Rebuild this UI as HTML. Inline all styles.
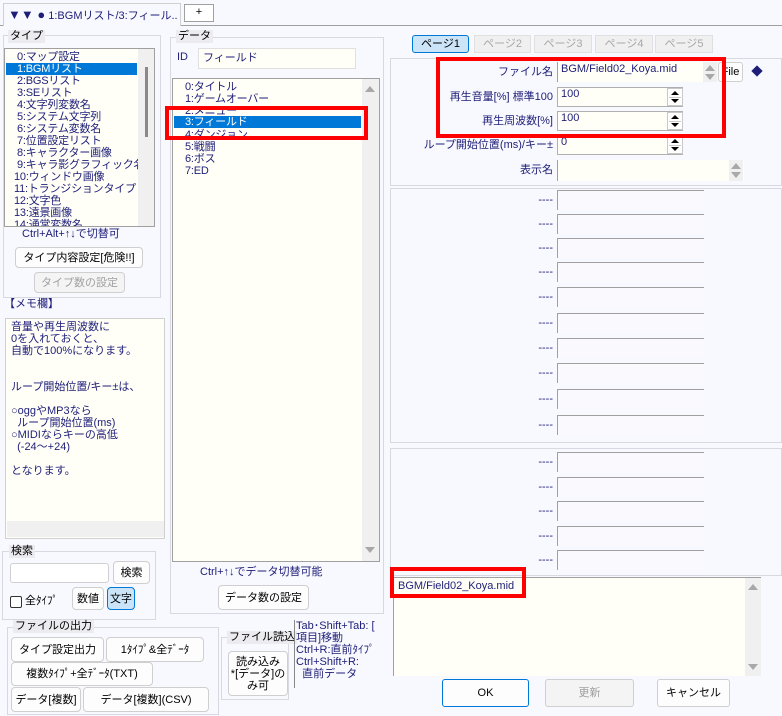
<!DOCTYPE html>
<html><head><meta charset="utf-8"><style>
*{box-sizing:border-box;margin:0;padding:0}
body{width:782px;height:716px;background:#f8f8ff;font-family:"Liberation Sans","Noto Sans CJK JP",sans-serif;font-size:11px;color:#1e1e78;position:relative;overflow:hidden}
.a{position:absolute}
.grp{position:absolute;border:1px solid #d8d8e0}
.lg{position:absolute;background:#ececf0;color:#000;padding:0 2px;line-height:13px;font-size:11px}
.box{position:absolute;background:#fffff8;border:1px solid #a0a0a0}
.btn{position:absolute;background:#fdfdfd;border:1px solid #cfcfcf;border-radius:4px;color:#000;text-align:center;font-size:11px;display:flex;align-items:center;justify-content:center;line-height:12px}
.dis{color:#a0a0a0;background:#f4f4f4}
.row{position:absolute;white-space:nowrap;line-height:12px;height:12px;letter-spacing:-0.2px}
.sel{background:#0078d7;color:#fff}
.red{position:absolute;border:4px solid #f00}
.lbl{position:absolute;text-align:right;white-space:nowrap;line-height:14px}
.vs{position:absolute;background:#f0f0f0}
.up{position:absolute;width:0;height:0;border-left:5px solid transparent;border-right:5px solid transparent;border-bottom:6px solid #a8a8a8}
.dn{position:absolute;width:0;height:0;border-left:5px solid transparent;border-right:5px solid transparent;border-top:6px solid #a8a8a8}
.spin{position:absolute;width:16px;background:#fff;border:1px solid #c8c8c8}
.spin:before{content:"";position:absolute;left:3px;top:2px;border-left:4px solid transparent;border-right:4px solid transparent;border-bottom:4px solid #000}
.spin:after{content:"";position:absolute;left:3px;top:10px;border-left:4px solid transparent;border-right:4px solid transparent;border-top:4px solid #000}
.spin i{position:absolute;left:1px;right:1px;top:8px;height:1px;background:#c8c8c8}
.tab{position:absolute;height:18px;border:1px solid #e0e0e0;background:#f0f0f0;color:#a8a8a8;text-align:center;line-height:16px}
</style></head><body>
<div class="a" style="left:0;top:25px;width:782px;height:1px;background:#a0a0a0"></div>
<div class="a" style="left:3px;top:3px;width:178px;height:23px;background:#f8f8ff;border:1px solid #d0d0d0;border-bottom:none;padding:5px 4px;color:#1e1e78;white-space:nowrap;line-height:12px"><span style="font-size:13px">▼▼ ●</span> 1:BGMリスト/3:フィール..</div>
<div class="a" style="left:184px;top:4px;width:30px;height:18px;background:#fff;border:1px solid #a0a0a0;text-align:center;line-height:15px;color:#000">+</div>

<div class="grp" style="left:3px;top:35px;width:158px;height:263px"></div>
<div class="lg" style="left:8px;top:30px">タイプ</div>
<div class="box" style="left:4px;top:48px;width:151px;height:179px;overflow:hidden">
<div class="row" style="left:12px;top:2px">0:マップ設定</div>
<div class="row sel" style="left:1px;top:14px;width:131px;padding-left:11px">1:BGMリスト</div>
<div class="row" style="left:12px;top:26px">2:BGSリスト</div>
<div class="row" style="left:12px;top:38px">3:SEリスト</div>
<div class="row" style="left:12px;top:50px">4:文字列変数名</div>
<div class="row" style="left:12px;top:62px">5:システム文字列</div>
<div class="row" style="left:12px;top:74px">6:システム変数名</div>
<div class="row" style="left:12px;top:86px">7:位置設定リスト</div>
<div class="row" style="left:12px;top:98px">8:キャラクター画像</div>
<div class="row" style="left:12px;top:110px">9:キャラ影グラフィック名</div>
<div class="row" style="left:9px;top:122px">10:ウィンドウ画像</div>
<div class="row" style="left:9px;top:134px">11:トランジションタイプ</div>
<div class="row" style="left:9px;top:146px">12:文字色</div>
<div class="row" style="left:9px;top:158px">13:遠景画像</div>
<div class="row" style="left:9px;top:170px">14:通常変数名</div>
<div class="vs" style="left:133px;top:0;width:16px;height:177px"></div>
<div class="a" style="left:140px;top:18px;width:3px;height:70px;background:#8a8a8a"></div>
</div>
<div class="a" style="left:22px;top:228px;line-height:12px">Ctrl+Alt+↑↓で切替可</div>
<div class="btn" style="left:15px;top:247px;width:128px;height:21px">タイプ内容設定[危険!!]</div>
<div class="btn dis" style="left:34px;top:272px;width:91px;height:21px">タイプ数の設定</div>

<div class="a" style="left:4px;top:298px;line-height:12px">【メモ欄】</div>
<div class="box" style="left:5px;top:318px;width:160px;height:221px;border-color:#d0d0d0;line-height:12px;padding:2px 0 0 5px;white-space:nowrap">音量や再生周波数に<br>0を入れておくと、<br>自動で100%になります。<br><br><br>ループ開始位置/キー±は、<br><br>○oggやMP3なら<br>&nbsp;&nbsp;ループ開始位置(ms)<br>○MIDIならキーの高低<br>&nbsp;&nbsp;(-24～+24)<br><br>となります。
<div class="vs" style="left:1px;top:202px;width:157px;height:16px"></div>
</div>

<div class="grp" style="left:2px;top:551px;width:154px;height:69px"></div>
<div class="lg" style="left:9px;top:545px">検索</div>
<div class="a" style="left:10px;top:563px;width:99px;height:20px;background:#fff;border:1px solid #d0d0d0;border-radius:3px"></div>
<div class="btn" style="left:113px;top:561px;width:37px;height:23px">検索</div>
<div class="a" style="left:10px;top:596px;width:12px;height:12px;border:1px solid #333;border-radius:2px;background:#fff"></div>
<div class="a" style="left:25px;top:594px;color:#000;line-height:14px">全ﾀｲﾌﾟ</div>
<div class="btn" style="left:72px;top:587px;width:32px;height:23px">数値</div>
<div class="btn" style="left:107px;top:587px;width:28px;height:23px;background:#cce4f7;border-color:#0078d7">文字</div>

<div class="grp" style="left:7px;top:627px;width:212px;height:88px"></div>
<div class="lg" style="left:13px;top:620px">ファイルの出力</div>
<div class="btn" style="left:11px;top:637px;width:93px;height:25px">タイプ設定出力</div>
<div class="btn" style="left:106px;top:637px;width:98px;height:25px">1ﾀｲﾌﾟ&amp;全ﾃﾞｰﾀ</div>
<div class="btn" style="left:11px;top:662px;width:142px;height:24px">複数ﾀｲﾌﾟ+全ﾃﾞｰﾀ(TXT)</div>
<div class="btn" style="left:11px;top:687px;width:70px;height:25px">データ[複数]</div>
<div class="btn" style="left:83px;top:687px;width:126px;height:25px">データ[複数](CSV)</div>
<div class="grp" style="left:221px;top:637px;width:68px;height:63px"></div>
<div class="lg" style="left:227px;top:631px">ファイル読込</div>
<div class="btn" style="left:228px;top:651px;width:60px;height:45px;line-height:12px">読み込み<br>*[データ]の<br>み可</div>
<div class="a" style="left:294px;top:620px;height:68px;border-left:1px solid #888;padding-left:1px;line-height:12px;white-space:nowrap">Tab･Shift+Tab: [<br>項目]移動<br>Ctrl+R:直前ﾀｲﾌﾟ<br>Ctrl+Shift+R:<br>&nbsp;&nbsp;直前データ</div>

<div class="grp" style="left:170px;top:37px;width:214px;height:577px"></div>
<div class="lg" style="left:176px;top:30px">データ</div>
<div class="a" style="left:177px;top:51px;line-height:12px">ID</div>
<div class="box" style="left:198px;top:48px;width:158px;height:21px;border-color:#e0e0e0;padding:2px 4px;line-height:14px">フィールド</div>
<div class="box" style="left:172px;top:78px;width:208px;height:484px;overflow:hidden">
<div class="row" style="left:12px;top:2px">0:タイトル</div>
<div class="row" style="left:12px;top:14px">1:ゲームオーバー</div>
<div class="row" style="left:12px;top:26px">2:メニュー</div>
<div class="row sel" style="left:1px;top:37px;width:187px;padding-left:11px">3:フィールド</div>
<div class="row" style="left:12px;top:50px">4:ダンジョン</div>
<div class="row" style="left:12px;top:62px">5:戦闘</div>
<div class="row" style="left:12px;top:74px">6:ボス</div>
<div class="row" style="left:12px;top:86px">7:ED</div>
<div class="vs" style="left:189px;top:0;width:17px;height:482px"></div>
<div class="up" style="left:192px;top:7px"></div>
<div class="dn" style="left:192px;top:468px"></div>
</div>
<div class="red" style="left:165px;top:106px;width:203px;height:34px"></div>
<div class="a" style="left:200px;top:566px;line-height:12px">Ctrl+↑↓でデータ切替可能</div>
<div class="btn" style="left:218px;top:585px;width:91px;height:25px">データ数の設定</div>

<div class="tab" style="left:412px;top:35px;width:57px;background:#cce4f7;border-color:#0078d7;color:#000;border-radius:3px">ページ1</div>
<div class="tab" style="left:474px;top:35px;width:57px">ページ2</div>
<div class="tab" style="left:534px;top:35px;width:58px">ページ3</div>
<div class="tab" style="left:595px;top:35px;width:58px">ページ4</div>
<div class="tab" style="left:655px;top:35px;width:58px">ページ5</div>

<div class="grp" style="left:390px;top:58px;width:392px;height:128px"></div>
<div class="lbl" style="left:400px;width:153px;top:65px">ファイル名</div>
<div class="box" style="left:557px;top:62px;width:160px;height:20px;border:none;border-left:1px solid #a0a0a0;padding:0 3px;line-height:14px">BGM/Field02_Koya.mid</div>
<div class="vs" style="left:703px;top:62px;width:14px;height:20px"></div>
<div class="up" style="left:705px;top:65px"></div><div class="dn" style="left:705px;top:74px"></div>
<div class="btn" style="left:718px;top:62px;width:25px;height:20px;border-radius:3px">File</div>
<div class="a" style="left:753px;top:67px;width:8px;height:8px;background:#1e1e78;transform:rotate(45deg)"></div>
<div class="lbl" style="left:400px;width:153px;top:90px">再生音量[%] 標準100</div>
<div class="box" style="left:557px;top:87px;width:126px;height:20px;border-color:#b0b0b0;padding:0 3px;line-height:13px">100</div>
<div class="spin" style="left:667px;top:88px;height:18px"><i></i></div>
<div class="lbl" style="left:400px;width:153px;top:114px">再生周波数[%]</div>
<div class="box" style="left:557px;top:111px;width:126px;height:20px;border-color:#b0b0b0;padding:0 3px;line-height:13px">100</div>
<div class="spin" style="left:667px;top:112px;height:18px"><i></i></div>
<div class="lbl" style="left:400px;width:153px;top:138px">ループ開始位置(ms)/キー±</div>
<div class="box" style="left:557px;top:135px;width:126px;height:20px;border-color:#b0b0b0;padding:0 3px;line-height:13px">0</div>
<div class="spin" style="left:667px;top:136px;height:18px"><i></i></div>
<div class="lbl" style="left:400px;width:153px;top:163px">表示名</div>
<div class="box" style="left:557px;top:160px;width:187px;height:21px;border:none;border-left:1px solid #a0a0a0"></div>
<div class="vs" style="left:729px;top:160px;width:14px;height:21px"></div>
<div class="up" style="left:731px;top:163px"></div><div class="dn" style="left:731px;top:172px"></div>
<div class="red" style="left:436px;top:57px;width:290px;height:81px"></div>

<div class="grp" style="left:390px;top:188px;width:392px;height:255px"></div>
<div class="grp" style="left:390px;top:448px;width:392px;height:128px"></div>
<div id="rows"></div>

<div class="box" style="left:393px;top:577px;width:368px;height:99px;border:none;border-left:1px solid #a0a0a0;border-top:1px solid #a0a0a0;padding:2px 4px;line-height:12px">BGM/Field02_Koya.mid</div>
<div class="vs" style="left:745px;top:578px;width:16px;height:98px"></div>
<div class="up" style="left:748px;top:584px"></div><div class="dn" style="left:748px;top:664px"></div>
<div class="red" style="left:390px;top:567px;width:136px;height:31px"></div>
<div class="btn" style="left:442px;top:679px;width:87px;height:28px;border-color:#0078d7;border-radius:3px">OK</div>
<div class="btn dis" style="left:545px;top:679px;width:89px;height:28px;border-radius:3px">更新</div>
<div class="btn" style="left:657px;top:679px;width:73px;height:28px;border-radius:3px">キャンセル</div>
<script>
var ys=[190,214,238,262,287,313,338,363,389,415,452,477,501,526,550];
var h='';ys.forEach(function(y){h+='<div class="lbl" style="left:500px;width:53px;top:'+(y+3)+'px">----</div><div class="a" style="left:557px;top:'+y+'px;width:147px;height:20px;border-left:1px solid #a0a0a0;border-top:1px solid #a0a0a0;background:#fafafe"></div>';});
document.getElementById('rows').innerHTML=h;
</script>
</body></html>
